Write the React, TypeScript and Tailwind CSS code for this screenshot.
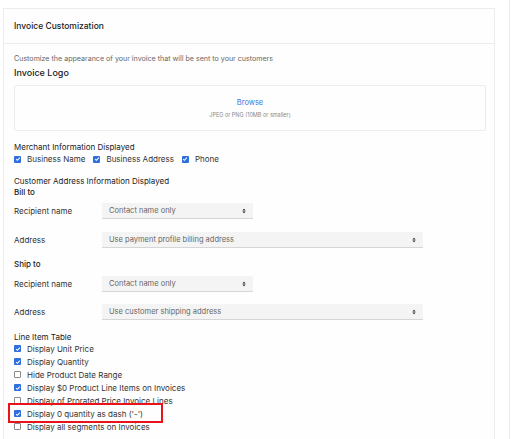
import React from 'react'

/* ── Small pieces ───────────────────────────────────────────────────────── */

function Check({ checked }: { checked: boolean }) {
  if (!checked) {
    return <span className="block w-[7px] h-[7px] rounded-[1px] border border-[#8a8a8a] bg-white shrink-0" />
  }
  return (
    <span className="flex items-center justify-center w-[7px] h-[7px] rounded-[1px] bg-[#2f6fe0] shrink-0">
      <svg viewBox="0 0 8 8" className="w-[6px] h-[6px]">
        <path d="M1.5 4.2 L3.2 5.8 L6.5 2.2" fill="none" stroke="#fff" strokeWidth="1.4" />
      </svg>
    </span>
  )
}

function CheckItem({ label, checked }: { label: string; checked: boolean }) {
  return (
    <div className="flex items-center gap-[6px]">
      <Check checked={checked} />
      <span>{label}</span>
    </div>
  )
}

function SelectRow({ label, value, wide }: { label: string; value: string; wide?: boolean }) {
  return (
    <div className="flex items-center h-[16px]">
      <span className="w-[88px] shrink-0 text-[8px] text-[#333]">{label}</span>
      <div
        className={`flex items-center justify-between h-[16px] pl-[7px] pr-[7px] bg-[#f4f4f4] border-b border-[#d6d6d6] text-[7.5px] text-[#666] ${
          wide ? 'w-[321px]' : 'w-[151px]'
        }`}
      >
        <span>{value}</span>
        <svg viewBox="0 0 6 8" className="w-[4px] h-[6px]">
          <path d="M3 0.5 L5.5 3.2 H0.5 Z M3 7.5 L5.5 4.8 H0.5 Z" fill="#222" />
        </svg>
      </div>
    </div>
  )
}

const lineItems: { label: string; checked: boolean }[] = [
  { label: 'Display Unit Price', checked: true },
  { label: 'Display Quantity', checked: true },
  { label: 'Hide Product Date Range', checked: false },
  { label: 'Display $0 Product Line Items on Invoices', checked: true },
  { label: 'Display of Prorated Price Invoice Lines', checked: false },
  { label: "Display 0 quantity as dash ('-')", checked: true },
  { label: 'Display all segments on Invoices', checked: false },
]

/* ── Page ───────────────────────────────────────────────────────────────── */

export default function App() {
  return (
    <div
      className="flex w-[512px] h-[439px] overflow-hidden bg-white text-[#222]"
      style={{ fontFamily: 'Inter, "Noto Sans", sans-serif' }}
    >
      <div className="relative ml-[3px] mt-[8px] w-[492px] border border-[#ececec] bg-[#fefefe] self-start">
        {/* header */}
        <div className="h-[35px] flex items-center pl-[10px] border-b border-[#ececec] text-[8.5px] font-medium">
          Invoice Customization
        </div>

        {/* body */}
        <div className="pl-[10px] pr-[8px] pt-[10px] pb-[20px] text-[8px]">
          <div className="h-[10px] flex items-center text-[7.1px] text-[#666]">
            Customize the appearance of your invoice that will be sent to your customers
          </div>
          <div className="mt-[3px] h-[12px] flex items-center text-[9px] font-medium">Invoice Logo</div>

          <div className="mt-[6px] h-[46px] border border-[#ececec] rounded-[2px] flex flex-col items-center justify-center">
            <span className="text-[7.5px] text-[#3a78e0] leading-[10px]">Browse</span>
            <span className="mt-[3px] text-[5.5px] text-[#888] leading-[8px]">JPEG or PNG (10MB or smaller)</span>
          </div>

          <div className="mt-[11px] h-[10px] flex items-center">Merchant Information Displayed</div>
          <div className="mt-[2px] h-[10px] flex items-center gap-[8px] text-[#333]">
            <CheckItem label="Business Name" checked />
            <CheckItem label="Business Address" checked />
            <CheckItem label="Phone" checked />
          </div>

          <div className="mt-[12px] h-[10px] flex items-center">Customer Address Information Displayed</div>
          <div className="mt-[1px] h-[10px] flex items-center font-medium">Bill to</div>

          <div className="mt-[6px]">
            <SelectRow label="Recipient name" value="Contact name only" />
          </div>
          <div className="mt-[13px]">
            <SelectRow label="Address" value="Use payment profile billing address" wide />
          </div>

          <div className="mt-[11px] h-[10px] flex items-center font-medium">Ship to</div>

          <div className="mt-[7px]">
            <SelectRow label="Recipient name" value="Contact name only" />
          </div>
          <div className="mt-[12px]">
            <SelectRow label="Address" value="Use customer shipping address" wide />
          </div>

          <div className="mt-[12px] h-[10px] flex items-center">Line Item Table</div>
          <div className="text-[#333]">
            {lineItems.map((item) => (
              <div key={item.label} className="h-[13px] flex items-center">
                <CheckItem label={item.label} checked={item.checked} />
              </div>
            ))}
          </div>
        </div>

        {/* highlight annotation */}
        <div className="absolute left-[4px] top-[394px] w-[155px] h-[20px] border-[2.5px] border-[#e8141a]" />
      </div>

      <div className="ml-[14px] h-full border-l border-[#ececec]" />
    </div>
  )
}
